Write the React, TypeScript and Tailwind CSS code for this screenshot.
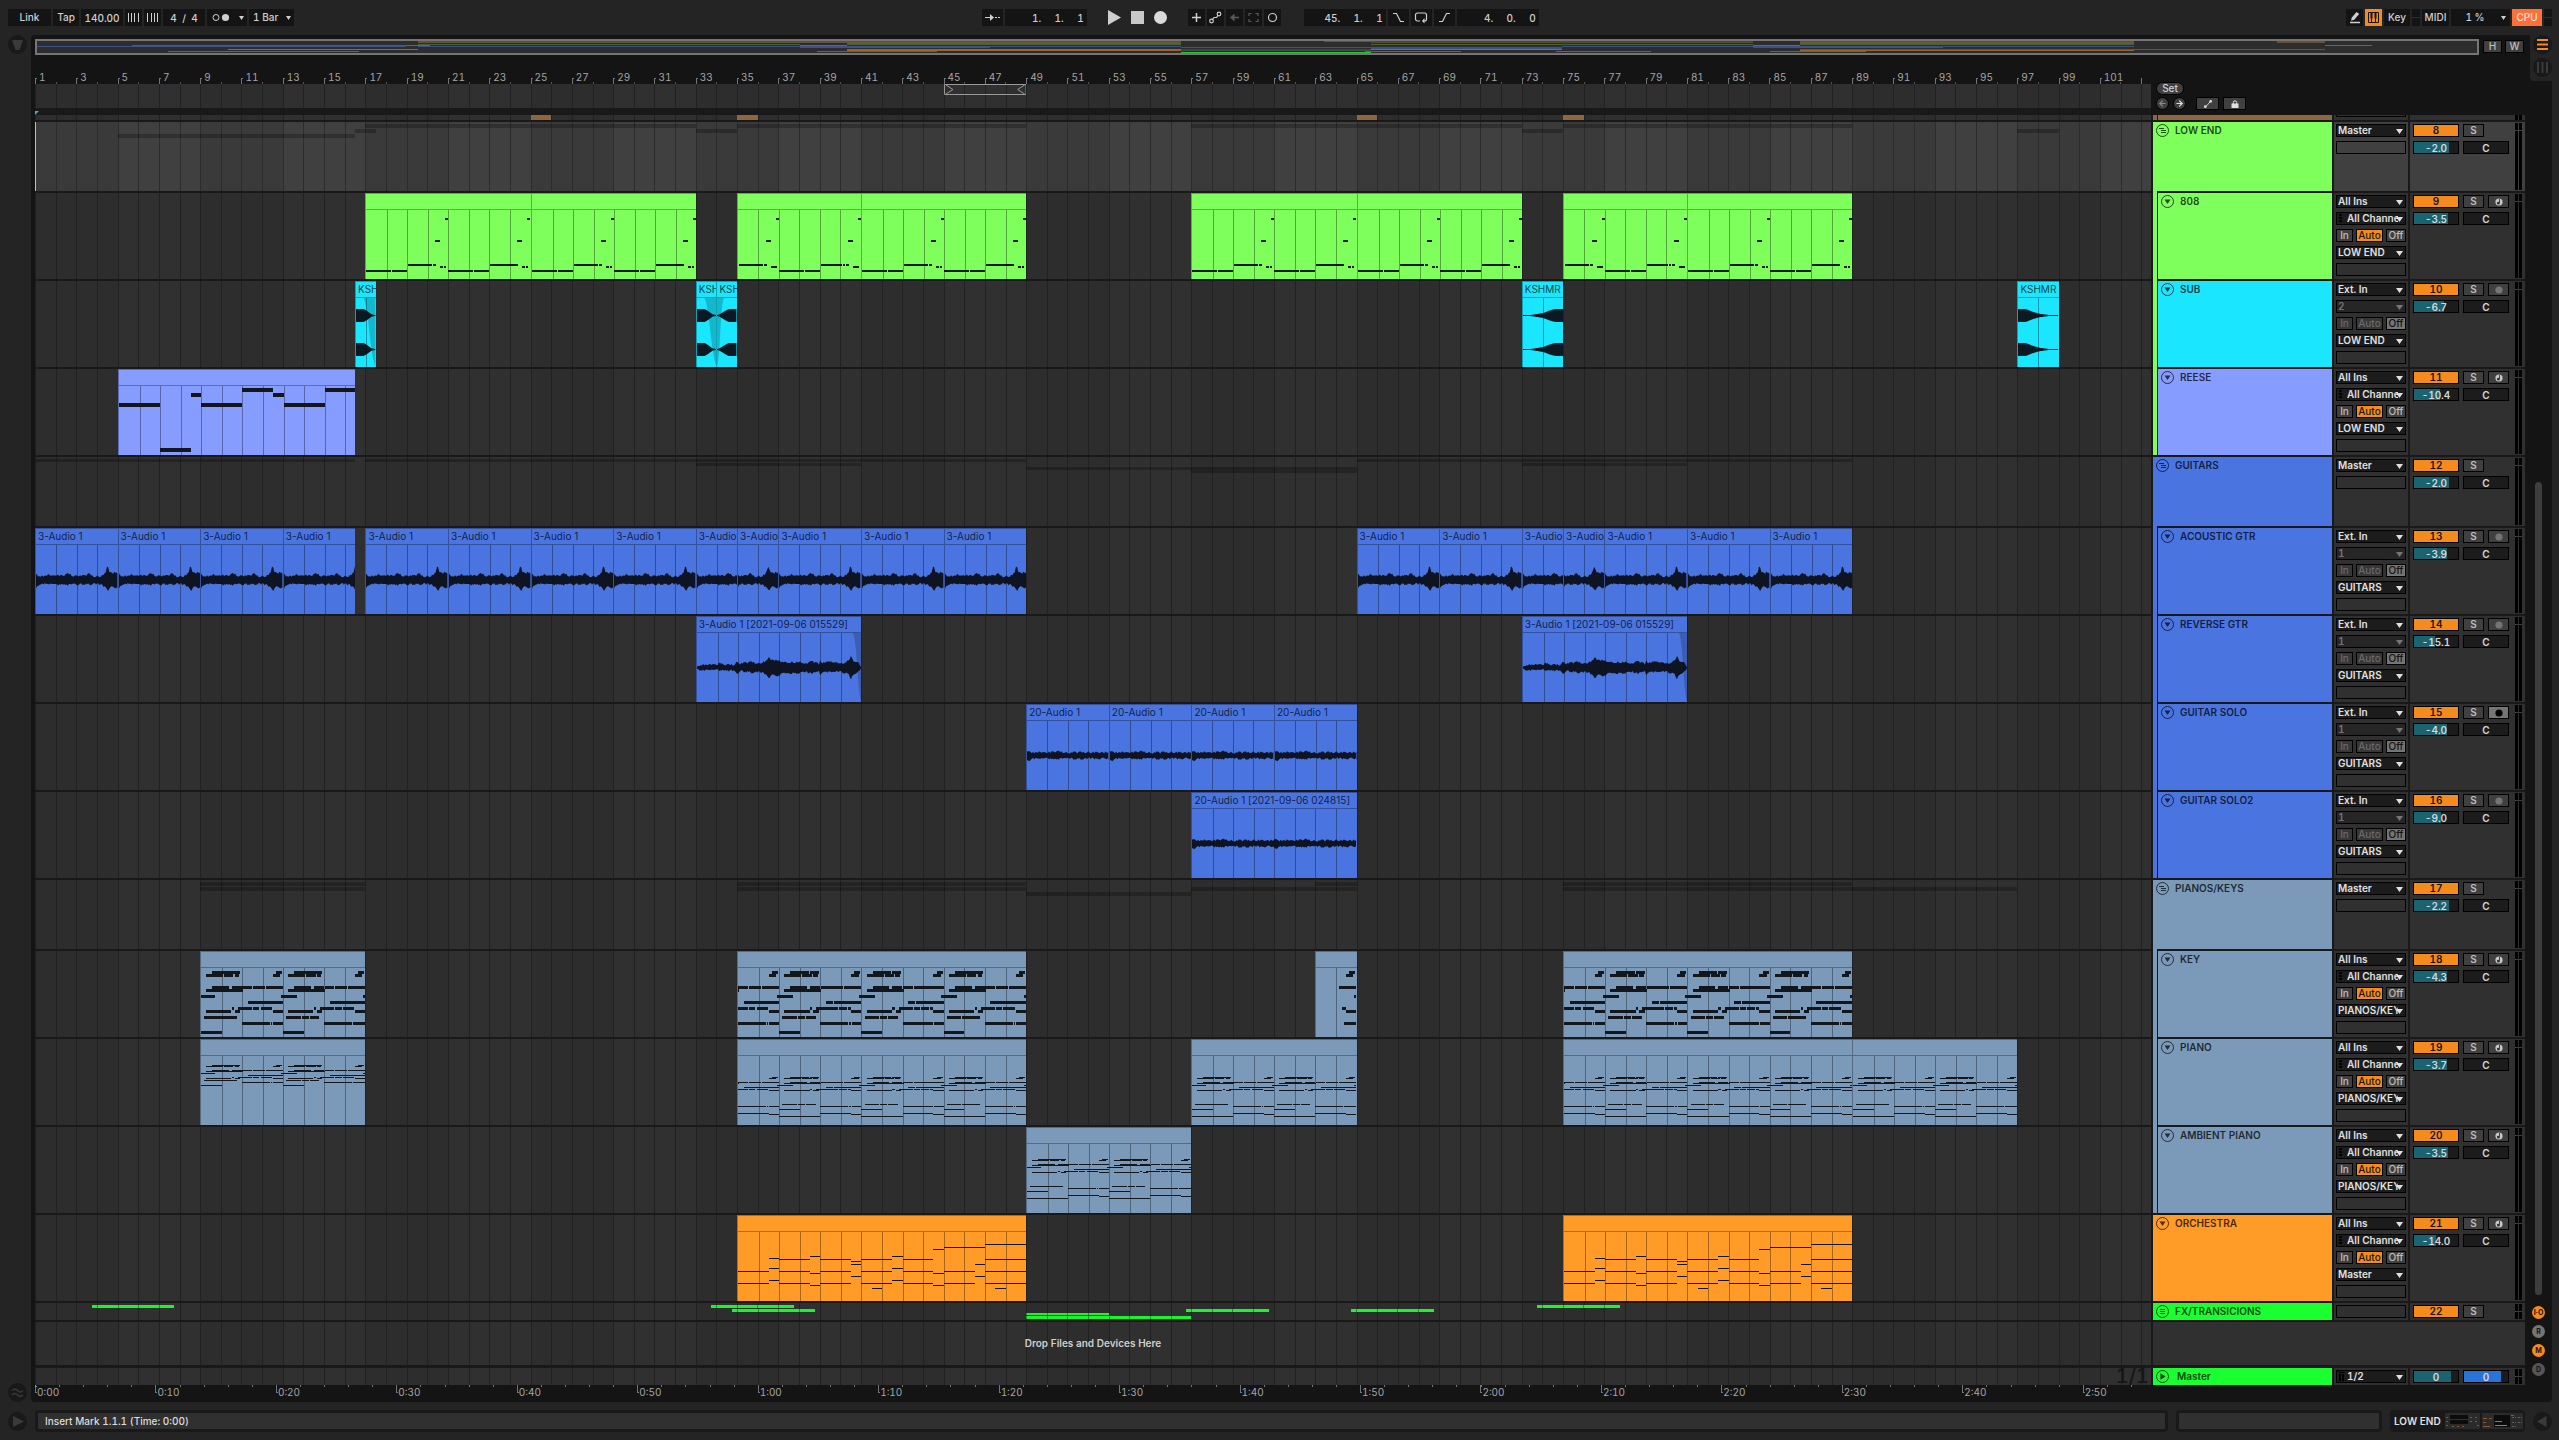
import type { ReactNode } from "react";
import { useState } from "react";
import { ArrowLeft, ArrowRight } from "lucide-react";

const BARS = 102.47;

const C = {
  green: "#7fff5c",
  cyan: "#1ae7ff",
  reese: "#879cff",
  blue: "#4a75e1",
  steel: "#7b9aba",
  orange: "#ff9b26",
  fx: "#19ff2f",
};

type Note = [from: number, to: number, y: number, h: number];

interface ClipData {
  from: number;
  to: number;
  name?: string;
  kind: "808" | "reese" | "key" | "keyTail" | "pianoA" | "pianoB" | "ambient" | "orch" | "acoustic" | "reverse" | "solo" | "sub";
  shape?: "out" | "in" | "riseLong" | "fallLong";
}

interface Track {
  name: string;
  num: number;
  color: string;
  type: "group" | "midi" | "audio";
  parent?: string;
  out?: string;
  input?: string;
  vol: string;
  fill: number;
  armed?: boolean;
  selected?: boolean;
  dense?: boolean;
  clips?: ClipData[];
  ghosts?: [from: number, to: number, row: number][];
}

/* ---------- note patterns, x in bars, y in px ---------- */

const bass: Note[] = [
  [0, 0.86, 60, 2], [0.88, 1.22, 60, 2], [1.26, 2, 60, 2],
  [2.04, 3.1, 54, 2], [3.13, 3.24, 54, 2], [3.27, 3.4, 54, 2],
  [3.62, 3.74, 56, 2], [3.78, 3.9, 56, 2],
  [3.38, 3.6, 30, 2],
  [3.86, 4, 8, 2],
];

const reese: Note[] = [
  [0, 2, 17, 4], [2, 3.5, 62, 4], [3.5, 4, 7, 4], [4, 6, 17, 4],
  [6, 7.5, 2, 4], [7.5, 8, 7, 4], [8, 10, 17, 4], [10, 11.5, 2, 4],
];

// each entry: row index plus the notes on it, over a four bar loop
const keyLoop: [row: number, from: number, to: number][] = [
  [0, 0.55, 1.45], [0, 1.48, 1.92], [0, 3.65, 3.95],
  [1, 0.25, 1.08], [1, 1.12, 1.58], [1, 1.64, 1.87], [1, 3.5, 3.86],
  [2, 0.55, 1.35], [2, 1.5, 1.98], [2, 2.02, 2.5], [2, 2.53, 3.12], [2, 3.15, 4],
  [3, 0.25, 2.05],
  [4, 0, 0.66], [4, 3.88, 4],
  [5, 2.27, 2.62], [5, 2.65, 4],
  [6, 1.5, 1.62], [6, 1.8, 2.5], [6, 2.54, 2.85], [6, 2.9, 3.3], [6, 3.33, 3.47],
  [7, 0.25, 1.48], [7, 1.66, 1.92], [7, 3.5, 4],
  [8, 0.15, 0.86], [8, 0.9, 1.25], [8, 1.29, 1.77],
  [9, 2, 3.36], [9, 3.4, 3.48], [9, 3.52, 4],
  [10, 0, 1],
];
const keyRows = [3, 6, 18, 21, 27, 33, 39, 42, 48, 54, 63];
const pianoRowsA = [9, 10, 14, 15, 17, 19, 21, 22, 24, 26, 29];
const pianoRowsB = [21, 22, 26, 27, 29, 31, 33, 34, 48, 50, 53];
const lowLoop: Note[] = [[2, 3.5, 57, 1], [3.5, 4, 58, 1], [0, 2, 60, 1]];

const keyTail: Note[] = [
  [1.65, 1.95, 3, 3], [1.5, 1.86, 6, 3], [1.15, 2, 18, 3], [1.88, 2, 27, 3],
  [1.3, 1.47, 39, 3], [1.5, 2, 42, 3], [1.4, 2, 54, 3],
];

const orch: Note[] = [
  [0, 1.5, 39, 1], [0, 1.5, 51, 1], [1.5, 2, 26, 1], [1.5, 2, 36, 1], [1.5, 2, 48, 1],
  [2, 3.5, 27, 1], [2, 3.5, 39, 1], [2, 3.5, 51, 1], [3.5, 4, 24, 1], [3.5, 4, 41, 1], [3.5, 4, 53, 1],
  [4, 5.5, 27, 1], [4, 5.5, 39, 1], [4, 5.5, 51, 1], [5.5, 6, 29, 1], [5.5, 6, 32, 1], [5.5, 6, 44, 1],
  [6, 7.5, 27, 1], [6, 7.5, 39, 1], [6, 7.5, 51, 1], [6.5, 7, 56, 1],
  [7.5, 8, 24, 1], [7.5, 8, 36, 1], [7.5, 8, 48, 1],
  [8, 9.5, 27, 1], [8, 9.5, 39, 1], [8, 9.5, 51, 1], [9.5, 10, 17, 1], [9.5, 10, 41, 1], [9.5, 10, 53, 1],
  [10, 12, 15, 1], [10, 11.5, 39, 1], [10, 11.5, 51, 1], [11.5, 12, 32, 1], [11.5, 12, 44, 1],
  [12, 14, 12, 1], [12, 14, 27, 1], [12, 14, 39, 1], [12, 14, 51, 1], [12.5, 13, 56, 1],
];

const keyNotes = (rows: number[], h: number): Note[] => keyLoop.map(([r, a, b]) => [a, b, rows[r], h]);

// repeat a four bar loop on the song grid and cut it to the clip
function tile(loop: Note[], from: number, to: number): Note[] {
  const out: Note[] = [];
  for (let base = Math.floor((from - 1) / 4) * 4 + 1; base < to; base += 4) {
    for (const [a, b, y, h] of loop) {
      const s = Math.max(base + a, from);
      const e = Math.min(base + b, to);
      if (e > s) out.push([s - from, e - from, y, h]);
    }
  }
  return out;
}

function notesFor({ kind, from, to }: ClipData): Note[] {
  switch (kind) {
    case "808":
      return tile(bass, from, to);
    case "reese":
      return reese;
    case "key":
      return tile(keyNotes(keyRows, 3), from, to);
    case "keyTail":
      return keyTail;
    case "pianoA":
      return tile(keyNotes(pianoRowsA, 1), from, to);
    case "pianoB":
      return tile([...keyNotes(pianoRowsB, 1), ...lowLoop], from, to);
    case "ambient":
      return tile([...keyNotes(pianoRowsB, 1), ...lowLoop].map(([a, b, y, h]) => [a, b, y - 6, h]), from, to);
    case "orch":
      return orch;
    default:
      return [];
  }
}

/* ---------- waveforms ---------- */

type Env = [x: number, top: number, bottom: number][];

const acousticEnv: Env = [
  [0, 6.5, 8.5], [0.08, 4.5, 5], [0.35, 4, 4], [0.6, 5.5, 4.5], [0.8, 4, 4], [1, 5, 5], [1.3, 4, 4], [1.6, 6.5, 5],
  [1.9, 3.5, 4], [1.97, 4.5, 4], [2, 6, 8], [2.08, 4.5, 4.5], [2.35, 4, 4], [2.6, 6, 4.5], [2.85, 3.5, 3.5], [3.2, 4, 5],
  [3.42, 7, 7], [3.48, 13.5, 9], [3.54, 13, 10], [3.6, 8, 8], [3.7, 7, 7], [4, 7.5, 8],
];
const reverseEnv: Env = [
  [0, 1, 1], [0.2, 3, 3], [1, 3, 2.5], [1.13, 5, 3], [1.25, 2.5, 2.5], [1.8, 3, 3.5], [2, 6, 7.5], [2.1, 4, 3.5], [2.7, 5.5, 5],
  [3, 4, 4.5], [3.3, 6, 6], [3.45, 7, 8.5], [3.5, 12, 11], [3.6, 7.5, 7.5], [4, 7, 8.5], [4.1, 5, 5], [4.9, 5.5, 6], [5.3, 4, 4],
  [5.6, 6, 5.5], [5.95, 3.5, 4], [6, 6.5, 8], [6.1, 4.5, 4], [6.6, 6, 5], [7, 3.5, 4], [7.4, 7, 7], [7.5, 11.5, 11], [7.6, 7, 7], [7.8, 6, 5], [8, 0.5, 0.5],
];
const soloEnv: Env = [
  [0, 4, 4.5], [0.12, 5, 5], [0.25, 3, 3], [0.5, 3.5, 3.5], [0.9, 3, 3], [1.6, 4, 3.5], [1.9, 3, 3], [2.5, 3, 3.5],
  [3, 3.5, 3], [3.5, 3, 3], [4, 3, 3],
];

const subEnv: Record<string, Env> = {
  out: [[0, 6.5, 6.5], [0.4, 6.5, 6.5], [0.6, 4, 4], [0.8, 1, 1], [1, 0.4, 0.4]],
  in: [[0, 0.4, 0.4], [0.15, 1.5, 1.5], [0.4, 4.5, 4.5], [0.6, 6.5, 6.5], [1, 6.5, 6.5]],
  riseLong: [[0, 0.4, 0.4], [0.4, 0.6, 0.6], [1, 2.5, 2.5], [1.4, 5.5, 5.5], [1.6, 6.5, 6.5], [2, 6.5, 6.5]],
  fallLong: [[0, 6.5, 6.5], [0.4, 6.5, 6.5], [0.7, 4, 4], [1, 2, 2], [1.5, 0.6, 0.6], [2, 0.4, 0.4]],
};

function sample(env: Env, x: number) {
  const i = env.findIndex((p) => p[0] >= x);
  if (i <= 0) return [env[0][1], env[0][2]];
  const [x0, t0, b0] = env[i - 1];
  const [x1, t1, b1] = env[i];
  const k = (x - x0) / (x1 - x0 || 1);
  return [t0 + (t1 - t0) * k, b0 + (b1 - b0) * k];
}

function wavePath(env: Env, from: number, to: number, mid: number, period: number, absolute: boolean, noise: number) {
  const top: string[] = [];
  const bottom: string[] = [];
  const step = 0.06;
  const n = Math.ceil((to - from) / step);
  for (let i = 0; i <= n; i++) {
    const x = Math.min(i * step, to - from);
    const phase = absolute ? (x + from - 1) % period : Math.min(x, period);
    const [t, b] = sample(env, phase);
    const k = Math.round(phase / step);
    const r1 = Math.sin(k * k * 0.7 + k * 2.3) * noise;
    const r2 = Math.sin(k * k * 1.1 + k * 1.9) * noise;
    top.push(`${x.toFixed(3)},${(mid - t + r1).toFixed(2)}`);
    bottom.unshift(`${x.toFixed(3)},${(mid + b + r2).toFixed(2)}`);
  }
  return `M${top.join("L")}L${bottom.join("L")}Z`;
}

const Wave = ({ clip }: { clip: ClipData }) => {
  const len = clip.to - clip.from;
  const paths: string[] = [];
  if (clip.kind === "acoustic") paths.push(wavePath(acousticEnv, clip.from, clip.to, 35, 4, true, 0.9));
  if (clip.kind === "reverse") paths.push(wavePath(reverseEnv, clip.from, clip.to, 34.5, 8, false, 0.9));
  if (clip.kind === "solo") paths.push(wavePath(soloEnv, clip.from, clip.to, 34.5, 4, true, 0.9));
  if (clip.kind === "sub" && clip.shape) {
    paths.push(wavePath(subEnv[clip.shape], clip.from, clip.to, 17.5, 2, false, 0));
    paths.push(wavePath(subEnv[clip.shape], clip.from, clip.to, 51.5, 2, false, 0));
  }
  if (!paths.length) return null;
  return (
    <svg viewBox={`0 0 ${len} 69`} preserveAspectRatio="none" width="100%" height="100%" shapeRendering="auto">
      {clip.kind === "reverse" && <path d={`M${len - 0.4},0C${len - 0.2},8 ${len - 0.2},55 ${len},69V0Z`} fill="#000" opacity=".2" />}
      {clip.shape === "out" && <path d={`M${len - 0.62},0C${len - 0.35},10 ${len - 0.3},55 ${len},69V0Z`} fill="#000" opacity=".2" />}
      {clip.shape === "in" && <path d="M0.35,0C0.15,10 0.2,55 0,69V0Z" fill="#000" opacity=".2" />}
      {paths.map((d, i) => (
        <path key={i} d={d} fill="#0b0f16" fillOpacity=".95" />
      ))}
    </svg>
  );
};

/* ---------- song data ---------- */

const run = (kind: ClipData["kind"], edges: number[], name?: string): ClipData[] =>
  edges.slice(0, -1).map((from, i) => ({ from, to: edges[i + 1], kind, name }));

const tracks: Track[] = [
  {
    name: "LOW END", num: 8, color: C.green, type: "group", out: "Master", vol: "-2.0", fill: 80, selected: true,
    ghosts: [[17, 33, 0], [35, 49, 0], [57, 73, 0], [75, 89, 0], [16.5, 17.5, 1], [33, 35, 1], [73, 75, 1], [97, 99, 1], [5, 16.5, 2]],
  },
  {
    name: "808", num: 9, color: C.green, type: "midi", parent: C.green, out: "LOW END", vol: "-3.5", fill: 77,
    clips: [...run("808", [17, 25, 33]), ...run("808", [35, 41, 49]), ...run("808", [57, 65, 73]), ...run("808", [75, 81, 89])],
  },
  {
    name: "SUB", num: 10, color: C.cyan, type: "audio", parent: C.green, input: "2", out: "LOW END", vol: "-6.7", fill: 68,
    clips: [
      { from: 16.5, to: 17.5, kind: "sub", shape: "out", name: "KSHMR" },
      { from: 33, to: 34, kind: "sub", shape: "out", name: "KSHMR" },
      { from: 34, to: 35, kind: "sub", shape: "in", name: "KSHMR" },
      { from: 73, to: 75, kind: "sub", shape: "riseLong", name: "KSHMR" },
      { from: 97, to: 99, kind: "sub", shape: "fallLong", name: "KSHMR" },
    ],
  },
  {
    name: "REESE", num: 11, color: C.reese, type: "midi", parent: C.green, out: "LOW END", vol: "-10.4", fill: 59,
    clips: run("reese", [5, 16.5]),
  },
  {
    name: "GUITARS", num: 12, color: C.blue, type: "group", out: "Master", vol: "-2.0", fill: 80, dense: true,
    ghosts: [[1, 16.5, 0], [17, 49, 0], [65, 89, 0], [33, 41, 1], [73, 81, 1], [49, 65, 2], [57, 65, 3]],
  },
  {
    name: "ACOUSTIC GTR", num: 13, color: C.blue, type: "audio", parent: C.blue, input: "1", out: "GUITARS", vol: "-3.9", fill: 75,
    clips: [
      ...run("acoustic", [1, 5, 9, 13, 16.5], "3-Audio 1"),
      ...run("acoustic", [17, 21, 25, 29, 33, 35, 37, 41, 45, 49], "3-Audio 1"),
      ...run("acoustic", [65, 69, 73, 75, 77, 81, 85, 89], "3-Audio 1"),
    ],
  },
  {
    name: "REVERSE GTR", num: 14, color: C.blue, type: "audio", parent: C.blue, input: "1", out: "GUITARS", vol: "-15.1", fill: 48,
    clips: [...run("reverse", [33, 41], "3-Audio 1 [2021-09-06 015529]"), ...run("reverse", [73, 81], "3-Audio 1 [2021-09-06 015529]")],
  },
  {
    name: "GUITAR SOLO", num: 15, color: C.blue, type: "audio", parent: C.blue, input: "1", out: "GUITARS", vol: "-4.0", fill: 75, armed: true,
    clips: run("solo", [49, 53, 57, 61, 65], "20-Audio 1"),
  },
  {
    name: "GUITAR SOLO2", num: 16, color: C.blue, type: "audio", parent: C.blue, input: "1", out: "GUITARS", vol: "-9.0", fill: 62,
    clips: run("solo", [57, 65], "20-Audio 1 [2021-09-06 024815]"),
  },
  {
    name: "PIANOS/KEYS", num: 17, color: C.steel, type: "group", out: "Master", vol: "-2.2", fill: 80,
    ghosts: [[9, 17, 0], [35, 49, 0], [63, 65, 0], [75, 89, 0], [9, 17, 1], [35, 49, 1], [57, 65, 1], [75, 97, 1], [49, 57, 2]],
  },
  {
    name: "KEY", num: 18, color: C.steel, type: "midi", parent: C.steel, out: "PIANOS/KEYS", vol: "-4.3", fill: 75,
    clips: [...run("key", [9, 17]), ...run("key", [35, 49]), ...run("keyTail", [63, 65]), ...run("key", [75, 89])],
  },
  {
    name: "PIANO", num: 19, color: C.steel, type: "midi", parent: C.steel, out: "PIANOS/KEYS", vol: "-3.7", fill: 75,
    clips: [...run("pianoA", [9, 17]), ...run("pianoB", [35, 49]), ...run("pianoB", [57, 65]), ...run("pianoB", [75, 89, 97])],
  },
  {
    name: "AMBIENT PIANO", num: 20, color: C.steel, type: "midi", parent: C.steel, out: "PIANOS/KEYS", vol: "-3.5", fill: 77,
    clips: run("ambient", [49, 57]),
  },
  {
    name: "ORCHESTRA", num: 21, color: C.orange, type: "midi", out: "Master", vol: "-14.0", fill: 50,
    clips: [...run("orch", [35, 49]), ...run("orch", [75, 89])],
  },
];

const fxClips: [from: number, to: number, row: number][] = [
  [3.75, 7.75, 0], [33.75, 37.75, 0], [34.75, 38.75, 1], [49, 53, 2], [49, 57, 3],
  [56.75, 60.75, 1], [64.75, 68.75, 1], [73.75, 77.75, 0],
];

const pct = (bars: number) => `${(bars / BARS) * 100}%`;

/* ---------- arrangement lanes ---------- */

const LaneGrid = ({ selected }: { selected?: boolean }) => (
  <svg className="absolute inset-0 h-full w-full" shapeRendering="crispEdges" aria-hidden="true">
    {Array.from({ length: 13 }, (_, i) => (
      <rect key={i} x={pct(i * 8 + 4)} width={pct(4)} height="100%" fill={selected ? "#404040" : "#303030"} />
    ))}
    {Array.from({ length: 103 }, (_, i) => (
      <rect key={i} x={pct(i)} width="1" height="100%" fill={selected ? "#2c2c2c" : "#212121"} />
    ))}
  </svg>
);

const Lane = ({ children, selected }: { children?: ReactNode; selected?: boolean }) => (
  <div className={`relative min-w-0 flex-1 overflow-hidden ${selected ? "bg-[#3a3a3a]" : "bg-[#2d2d2d]"}`}>
    <LaneGrid selected={selected} />
    {children}
  </div>
);

const Clip = ({ clip, color }: { clip: ClipData; color: string }) => {
  const len = clip.to - clip.from;
  const firstLine = Math.ceil(clip.from + 0.01);
  const lines = Array.from({ length: Math.ceil(clip.to) - firstLine }, (_, i) => firstLine + i - clip.from);
  const rel = (b: number) => `${(b / len) * 100}%`;
  return (
    <div
      className="absolute inset-y-0 flex flex-col overflow-hidden border-l border-black/30"
      style={{ left: pct(clip.from - 1), width: pct(len), backgroundColor: color }}
    >
      <div className="h-[17px] shrink-0 overflow-hidden border-y border-black/30 pl-0.5 text-[10px] leading-[15px] whitespace-nowrap text-black/75 proportional-nums">
        {clip.name}
      </div>
      <svg className="min-h-0 w-full flex-1" shapeRendering="crispEdges" aria-hidden="true">
        {lines.map((b) => (
          <rect key={b} x={rel(b)} width="1" height="100%" fill="#000" fillOpacity=".35" />
        ))}
        {notesFor(clip).map(([a, b, y, h], i) => (
          <rect key={i} x={rel(a)} y={y} width={rel(b - a)} height={h} fill="#13171c" />
        ))}
        <Wave clip={clip} />
      </svg>
    </div>
  );
};

const ghostTop = ["top-0.5", "top-[7px]", "top-3", "top-[17px]"];
const fxTop = ["top-0.5", "top-1.5", "top-2.5", "top-[13px]"];

/* ---------- track controls ---------- */

const Caret = ({ dim }: { dim?: boolean }) => (
  <svg viewBox="0 0 7 5" className="pointer-events-none absolute top-1 right-0.5 h-[5px] w-[7px]" aria-hidden="true">
    <path d="M0 0h7L3.5 5Z" fill={dim ? "#757575" : "#e0e0e0"} />
  </svg>
);

const Chooser = ({ label, value, dim, icon }: { label: string; value: string; dim?: boolean; icon?: "dots" | "bars" }) => (
  <div className={`relative h-[13px] w-[70px] border border-black ${dim ? "bg-[#262626]" : "bg-[#1c1c1c]"}`}>
    <select
      aria-label={label}
      disabled={dim}
      className={`block h-[11px] w-[61px] appearance-none overflow-hidden text-[10px] leading-[11px] font-semibold whitespace-nowrap opacity-100 outline-none ${icon ? "pl-2.5" : "pl-px"} ${dim ? "text-[#757575]" : "text-[#e0e0e0]"}`}
    >
      <option>{value}</option>
    </select>
    {icon && (
      <svg viewBox="0 0 5 9" className="absolute top-px left-0.5 h-[9px] w-[5px]" shapeRendering="crispEdges" aria-hidden="true">
        {icon === "dots" ? <path d="M0 0h3v2H0zM0 3h3v2H0zM0 6h3v2H0z" fill="#000" /> : <path d="M0 2h2v7H0zM3 2h2v7H3zM0 0h5v1H0z" fill="#000" />}
      </svg>
    )}
    <Caret dim={dim} />
  </div>
);

const monitorBtn = "h-[13px] border border-black text-center text-[10px] leading-[11px] font-medium";

const Monitor = ({ audio }: { audio: boolean }) => (
  <div className="flex gap-[3px]">
    <button className={`${monitorBtn} w-[17px] ${audio ? "bg-[#373737] text-[#6a6a6a]" : "bg-[#404040] text-[#bdbdbd]"}`}>In</button>
    <button className={`${monitorBtn} w-[27px] ${audio ? "bg-[#373737] text-[#6a6a6a]" : "bg-[#f58b1c] text-[#1a1a1a]"}`}>Auto</button>
    <button className={`${monitorBtn} w-5 ${audio ? "bg-[#757575] text-[#111]" : "bg-[#404040] text-[#bdbdbd]"}`}>Off</button>
  </div>
);

const Slot = () => <div className="h-[13px] w-[70px] border border-black" />;

const Value = ({ label, value, fill, blue }: { label: string; value: string; fill: number; blue?: boolean }) => (
  <input
    aria-label={label}
    defaultValue={value}
    className="h-[13px] w-[46px] border border-black text-center text-[10px] leading-[11px] font-semibold text-[#d8d8d8] outline-none"
    style={{ background: `linear-gradient(90deg, ${blue ? "#2874d8" : "#1a6472"} ${fill}%, #1c1c1c ${fill}%)` }}
  />
);

const Activator = ({ num }: { num: number }) => (
  <button className="h-[13px] w-[46px] border border-black bg-[#f58b1c] text-center text-[10px] leading-[11px] font-semibold text-[#141414]">{num}</button>
);

const Solo = () => (
  <button className="h-[13px] w-[21px] border border-black bg-[#404040] text-center text-[10px] leading-[11px] font-semibold text-[#bdbdbd]">S</button>
);

const Arm = ({ midi, on }: { midi: boolean; on?: boolean }) => (
  <button aria-label="Arm" className={`flex h-[13px] w-[21px] items-center justify-center border border-black ${on ? "bg-[#757575]" : "bg-[#404040]"}`}>
    <svg viewBox="0 0 8 8" className="h-2 w-2">
      <circle cx="4" cy="4" r="3.6" fill={on ? "#000" : midi ? "#c8c8c8" : "#757575"} />
      {midi && <path d="M4 .8h.9v4.400a1.500 1.300 0 1 1-.9-1.200Z" fill="#333" />}
    </svg>
  </button>
);

const Meter = () => (
  <div className="my-px ml-auto flex gap-px self-stretch">
    <div className="flex w-[3px] flex-col bg-black pt-[7px]"><div className="h-px bg-[#404040]" /></div>
    <div className="flex w-[3px] flex-col bg-black pt-[7px]"><div className="h-px bg-[#404040]" /></div>
  </div>
);

const FoldIcon = ({ kind }: { kind: "down" | "right" | "group" | "list" }) => (
  <svg viewBox="0 0 13 13" className="h-[13px] w-[13px] shrink-0" fill="none" stroke="#000" strokeOpacity=".7" aria-hidden="true">
    <circle cx="6.5" cy="6.5" r="6" />
    {kind === "down" && <path d="M3.5 4.5h6l-3 4.5Z" fill="#000" fillOpacity=".7" stroke="none" />}
    {kind === "right" && <path d="M4.5 3.2v6.6l5-3.3Z" fill="#000" fillOpacity=".8" stroke="none" />}
    {kind === "group" && <path d="M3 4.5h5M5 6.5h5M5 8.5h5" />}
    {kind === "list" && <path d="M4 4.5h5M4 6.5h5M4 8.5h5" />}
  </svg>
);

const TrackTitle = ({ name, color, parent, icon }: { name: string; color: string; parent?: string; icon: "down" | "right" | "group" | "list" }) => (
  <div className="ml-0.5 flex w-[179px] shrink-0">
    {parent && <div className="-mt-0.5 mr-px w-1" style={{ backgroundColor: parent }} />}
    <div className="flex min-w-0 flex-1 items-start gap-1.5 pt-0.5 pl-[3px]" style={{ backgroundColor: color }}>
      <FoldIcon kind={icon} />
      <span className={`text-[10px] leading-[13px] font-semibold text-black/75 ${icon === "right" ? "pl-0.5" : ""}`}>{name}</span>
    </div>
  </div>
);

const TrackRow = ({ track }: { track: Track }) => {
  const bg = track.selected ? "bg-[#404040]" : "bg-[#303030]";
  const group = track.type === "group";
  const audio = track.type === "audio";
  return (
    <div className={`flex shrink-0 ${group ? "h-[69px]" : "h-[86px]"}`}>
      <Lane selected={track.selected}>
        {track.ghosts?.map(([a, b, row], i) => (
          <div
            key={i}
            className={`absolute bg-black/25 ${track.dense ? "h-[3px]" : "h-1"} ${track.dense ? fxTop[row] : ghostTop[row]}`}
            style={{ left: pct(a - 1), width: pct(b - a) }}
          />
        ))}
        {track.clips?.map((clip) => <Clip key={clip.from} clip={clip} color={track.color} />)}
        {track.selected && <div className="absolute inset-y-0 left-0 w-px bg-[#7fd8ea]" />}
      </Lane>
      <TrackTitle name={track.name} color={track.color} parent={track.parent} icon={group ? "group" : "down"} />
      <div className={`ml-0.5 flex w-[74px] shrink-0 flex-col gap-1 px-0.5 pt-0.5 ${bg}`}>
        {group ? (
          <Chooser label={`${track.name} output`} value={track.out!} />
        ) : (
          <>
            <Chooser label={`${track.name} input`} value={audio ? "Ext. In" : "All Ins"} />
            <Chooser label={`${track.name} channel`} value={audio ? track.input! : "All Channels"} dim={audio} icon={audio ? undefined : "dots"} />
            <Monitor audio={audio} />
            <Chooser label={`${track.name} output`} value={track.out!} />
          </>
        )}
        <Slot />
      </div>
      <div className={`ml-0.5 flex w-[115px] shrink-0 px-[3px] ${bg}`}>
        <div className="flex flex-col gap-1 pt-0.5">
          <div className="flex gap-1">
            <Activator num={track.num} />
            <Solo />
            {!group && <Arm midi={!audio} on={track.armed} />}
          </div>
          <div className="flex gap-1">
            <Value label={`${track.name} volume`} value={track.vol} fill={track.fill} />
            <Value label={`${track.name} pan`} value="C" fill={0} />
          </div>
        </div>
        <Meter />
      </div>
    </div>
  );
};

/* ---------- top bar ---------- */

const box = "flex h-[17px] shrink-0 items-center justify-center bg-[#141414] text-[10px] font-medium text-[#cfcfcf]";
const field = "h-[17px] shrink-0 bg-[#141414] text-[10px] font-medium text-[#cfcfcf] outline-none";

const IconBox = ({ label, children, wide, active }: { label: string; children: ReactNode; wide?: boolean; active?: boolean }) => (
  <button
    aria-label={label}
    className={`flex h-[17px] shrink-0 items-center justify-center ${wide ? "w-[21px]" : "w-[17px]"} ${active ? "bg-[#f58b1c]" : "bg-[#141414]"}`}
  >
    <svg viewBox="0 0 17 17" className="h-[17px] w-[17px]" fill="none" stroke="#cfcfcf" strokeWidth="1.2">
      {children}
    </svg>
  </button>
);

const TopBar = () => (
  <header className="flex h-[35px] shrink-0 items-center pl-2 pr-[7px]">
    <div className="flex gap-0.5">
      <button className={`${box} w-[43px]`}>Link</button>
      <button className={`${box} w-[26px]`}>Tap</button>
      <input aria-label="Tempo" defaultValue="140.00" className={`${field} w-[42px] text-center`} />
      <IconBox label="Nudge down"><path d="M3.5 4v9M6.5 4v9M9.5 4v9M13.5 4v9" strokeWidth="1" shapeRendering="crispEdges" /></IconBox>
      <IconBox label="Nudge up"><path d="M3.5 4v9M7.5 4v9M10.5 4v9M13.5 4v9" strokeWidth="1" shapeRendering="crispEdges" /></IconBox>
      <input aria-label="Time signature" defaultValue="4  /  4" className={`${field} w-[42px] text-center whitespace-pre`} />
      <button aria-label="Metronome" className={`${box} w-10`}>
        <svg viewBox="0 0 40 17" className="h-[17px] w-10">
          <circle cx="9" cy="8.5" r="3" fill="none" stroke="#cfcfcf" />
          <circle cx="18.5" cy="8.5" r="3.6" fill="#cfcfcf" />
          <path d="M32 7h5l-2.500 4Z" fill="#cfcfcf" />
        </svg>
      </button>
      <div className="relative">
        <select aria-label="Quantization" className={`${field} block w-[45px] appearance-none pl-1`}>
          <option>1 Bar</option>
        </select>
        <svg viewBox="0 0 5 4" className="pointer-events-none absolute top-[7px] right-[3px] h-1 w-[5px]">
          <path d="M0 0h5L2.500 4Z" fill="#cfcfcf" />
        </svg>
      </div>
    </div>
    <div className="grow-[46]" />
    <div className="flex items-center gap-0.5">
      <IconBox label="Follow" wide><path d="M1 8.5h7M11 8.5h2M14 8.5h2" /><path d="M6 5l4 3.500L6 12Z" fill="#cfcfcf" stroke="none" /></IconBox>
      <input aria-label="Position" defaultValue="1.     1.     1" className={`${field} w-[82px] pr-[3px] text-right`} />
      <div className="flex items-center px-4">
        <button aria-label="Play" className="flex w-6 items-center">
          <svg viewBox="0 0 14 15" className="ml-[3px] h-[15px] w-3.5"><path d="M0 0v15l13-7.500Z" fill="#cfcfcf" /></svg>
        </button>
        <button aria-label="Stop" className="flex w-6 items-center pl-0.5"><span className="h-[13px] w-[13px] bg-[#c8c8c8]" /></button>
        <button aria-label="Record" className="flex w-[17px] items-center pl-px"><span className="h-[13px] w-[13px] rounded-full bg-[#dadada]" /></button>
      </div>
      <IconBox label="Overdub"><path d="M8.5 4v9M4 8.5h9" strokeWidth="1.5" /></IconBox>
      <IconBox label="Automation arm"><circle cx="4.5" cy="12" r="1.8" /><circle cx="12" cy="5" r="1.8" /><path d="M5.500 10.500 7 8.500h2.500L11 6.500" /></IconBox>
      <IconBox label="Re-enable automation"><path d="M13 8.5H7" stroke="#5a5a5a" strokeWidth="1.5" /><path d="M8.500 4.500v8L4 8.500Z" fill="#5a5a5a" stroke="none" /></IconBox>
      <IconBox label="Capture"><path d="M4 7V4.500h2.500M10.500 4.500H13V7M13 10v2.500h-2.500M6.500 12.500H4V10" stroke="#5a5a5a" /></IconBox>
      <IconBox label="Session record"><circle cx="8.5" cy="8.5" r="4" /></IconBox>
      <input aria-label="Loop start" defaultValue="45.     1.     1" className={`${field} ml-[21px] w-[82px] pr-[3px] text-right`} />
      <IconBox label="Punch in" wide><path d="M3 4.500h3.500l4 8H14" /></IconBox>
      <IconBox label="Loop" wide><path d="M7 12H4.500a2 2 0 0 1-2-2V6a2 2 0 0 1 2-2h7a2 2 0 0 1 2 2v4a2 2 0 0 1-2 2H10" /><path d="M11.500 9 9 12l2.500 2.500Z" fill="#cfcfcf" stroke="none" /></IconBox>
      <IconBox label="Punch out" wide><path d="M3 12.500h3.500l4-8H14" /></IconBox>
      <input aria-label="Loop length" defaultValue="4.     0.     0" className={`${field} w-[82px] pr-[3px] text-right`} />
    </div>
    <div className="grow-[54]" />
    <div className="flex gap-0.5">
      <IconBox label="Draw mode"><path d="M4 13.500h10" strokeWidth="1.500" /><path d="M5 11.800 5.800 8.500l4.700-5.500 2.700 2-5 5.800Z" fill="#cfcfcf" stroke="none" /></IconBox>
      <IconBox label="Computer keyboard" active>
        <path d="M3.5 3.5h10v10h-10zM6.5 9v4.500M10.5 9v4.500" stroke="#141414" strokeWidth="1" />
        <path d="M5.500 3.500h2v6h-2zM9.500 3.500h2v6h-2z" fill="#141414" stroke="none" />
      </IconBox>
      <button className={`${box} w-[26px]`}>Key</button>
      <div className={`${box} w-2`}><span className="h-px w-2 bg-[#2c2c2c]" /></div>
      <button className={`${box} w-[27px]`}>MIDI</button>
      <button className={`${box} w-[59px] gap-4 pl-2.5`}>
        1 %
        <svg viewBox="0 0 5 4" className="h-1 w-[5px]"><path d="M0 0h5L2.500 4Z" fill="#cfcfcf" /></svg>
      </button>
      <button className="h-[17px] w-[30px] bg-[#ff7038] text-[10px] font-medium text-[#e8e0dc]">CPU</button>
      <div className={`${box} w-2`}><span className="h-px w-2 bg-[#2c2c2c]" /></div>
    </div>
  </header>
);

/* ---------- overview and rulers ---------- */

const OVERVIEW_BARS = 102.4;

const overview: [from: number, to: number, y: number, h: number, color: string][] = [
  [17, 33, 0, 2, "#674f3c"], [33, 49, 0, 2, "#674f3c"], [57, 73, 0, 2, "#5a4636"], [75, 89, 0, 2, "#674f3c"], [55, 57, 0, 1, "#674f3c"], [95, 97, 0, 2, "#674f3c"],
  [35, 49, 1, 2, "#715339"], [75, 89, 1, 2, "#715339"], [17, 33, 3, 1, "#44632f"], [35, 49, 3, 1, "#44632f"], [57, 73, 3, 1, "#44632f"], [75, 89, 3, 1, "#44632f"],
  [16.5, 17.5, 4, 1, "#238088"], [33, 35, 4, 1, "#238088"], [73, 75, 4, 1, "#238088"], [97, 99, 4, 1, "#238088"], [5, 16.5, 4, 1, "#4d5886"],
  [1, 16.5, 5, 1, "#3c508c"], [17, 49, 5, 1, "#3c508c"], [65, 89, 5, 1, "#3c508c"], [33, 41, 6, 1, "#3c508c"], [73, 81, 6, 1, "#3c508c"],
  [49, 65, 6, 1, "#3c508c"], [57, 65, 7, 1, "#3c508c"],
  [9, 17, 8, 1, "#5f7386"], [35, 49, 8, 1, "#5f7386"], [57, 65, 8, 1, "#5f7386"], [75, 97, 8, 1, "#4c5a68"], [49, 57, 8, 2, "#3d4650"],
  [35, 49, 9, 1, "#98642a"], [75, 89, 9, 1, "#98642a"],
  [6.5, 14.5, 10, 1, "#2a8a30"], [33.75, 38.75, 10, 1, "#2a8a30"], [49, 57, 11, 1, "#1fc62e"], [56.75, 60.75, 10, 1, "#2a8a30"],
  [64.75, 68.75, 10, 1, "#2a8a30"], [73.75, 77.75, 10, 1, "#2a8a30"],
];

const Overview = () => (
  <div className="flex h-5 items-start gap-[3px] pt-1 pr-px">
    <div className="mr-px h-4 flex-1 border-2 border-[#757575] bg-[#2d2d2d]">
      <svg className="block h-full w-full" shapeRendering="crispEdges" aria-hidden="true">
        {overview.map(([a, b, y, h, fill], i) => (
          <rect key={i} x={`${((a - 1) / OVERVIEW_BARS) * 100}%`} y={y} width={`${((b - a) / OVERVIEW_BARS) * 100}%`} height={h} fill={fill} />
        ))}
      </svg>
    </div>
    <button className="mt-px h-[13px] w-[19px] border border-black bg-[#404040] text-[10px] leading-[11px] font-medium text-[#bdbdbd]">H</button>
    <button className="mt-px h-[13px] w-[19px] border border-black bg-[#404040] text-[10px] leading-[11px] font-medium text-[#bdbdbd]">W</button>
  </div>
);

const BarRuler = () => (
  <div className="flex h-[29px] items-end">
    {Array.from({ length: 51 }, (_, i) => (
      <div key={i} className="flex h-3 min-w-0 basis-0 items-end" style={{ flexGrow: 2 }}>
        <div className="flex h-full w-1/2 items-end">
          <span className="h-[6px] w-0.5 shrink-0 border-t border-l border-[#757575]" />
          <span className="pb-px pl-0.5 text-[10px] leading-[11px] text-[#a5a5a5]">{i * 2 + 1}</span>
        </div>
        <span className="h-0.5 w-px bg-[#555]" />
      </div>
    ))}
    <div className="flex h-3 basis-0 items-end" style={{ flexGrow: 0.47 }}>
      <span className="h-[6px] w-px bg-[#757575]" />
    </div>
  </div>
);

const TimeRuler = () => (
  <div className="flex h-[17px] min-w-0 flex-1">
    {Array.from({ length: 18 }, (_, i) => (
      <div key={i} className="flex h-full min-w-0 basis-0" style={{ flexGrow: i === 17 ? 5.66 : 10 }}>
        <span className="h-2 w-0.5 shrink-0 border-b border-l border-[#757575]" />
        <span className="text-[10px] leading-[15px] text-[#a5a5a5]">{`${Math.floor(i / 6)}:${(i % 6) * 10 || "00"}`}</span>
      </div>
    ))}
  </div>
);

const TimeTicks = () => (
  <svg className="absolute inset-x-0 top-0 h-0.5 w-full" shapeRendering="crispEdges" aria-hidden="true">
    {Array.from({ length: 88 }, (_, i) => (
      <rect key={i} x={`${((i * 2) / 175.66) * 100}%`} width="1" height="2" fill="#757575" />
    ))}
    <path d="M0 0h1v1h1v1H0Z" fill="#2bb8d8" />
  </svg>
);

const roundBtn = "flex h-[13px] items-center justify-center rounded-full border border-black bg-[#404040]";

const RulerSection = () => (
  <div className="flex">
    <div className="min-w-0 flex-1">
      <BarRuler />
      <div className="flex h-6">
        <Lane>
          <svg
            className="absolute top-0 h-[11px]"
            style={{ left: pct(44), width: pct(4) }}
            viewBox="0 0 83 11"
            preserveAspectRatio="none"
            fill="none"
            stroke="#9a9a9a"
          >
            <path d="M.5.5h82v10h-82ZM2 1l7 4.500L2 10M81 1l-7 4.500L81 10" />
          </svg>
        </Lane>
      </div>
      <div className="flex h-[7px] items-end bg-[#191919]">
        <svg viewBox="0 0 4 4" className="h-1 w-1"><path d="M0 0h4L0 4Z" fill="#2bb8d8" /></svg>
      </div>
    </div>
    <div className="flex w-[374px] shrink-0 flex-col items-start gap-0.5 pt-[27px] pl-[5px]">
      <button className={`${roundBtn} w-7 text-[10px] font-medium text-[#cfcfcf]`}>Set</button>
      <div className="flex">
        <button aria-label="Previous locator" className={`${roundBtn} w-[13px]`}><ArrowLeft size={9} strokeWidth={3} color="#8a8a8a" /></button>
        <button aria-label="Next locator" className={`${roundBtn} ml-1 w-[13px]`}><ArrowRight size={9} strokeWidth={3} color="#e0e0e0" /></button>
        <button aria-label="Automation mode" className="ml-2.5 flex h-[13px] w-[23px] items-center justify-center border border-black bg-[#404040]">
          <svg viewBox="0 0 9 9" className="h-2 w-2"><path d="M1.500 7.500 4 5.500l1.500-2 2-2" stroke="#e0e0e0" fill="none" /><circle cx="1.5" cy="7.5" r="1.5" fill="#e0e0e0" /><circle cx="7.5" cy="1.5" r="1.5" fill="#e0e0e0" /></svg>
        </button>
        <button aria-label="Lock envelopes" className="ml-1 flex h-[13px] w-[23px] items-center justify-center border border-black bg-[#404040]">
          <svg viewBox="0 0 8 8" className="h-2 w-2"><path d="M2.300 4V2.500a1.700 1.700 0 0 1 3.400 0V4" stroke="#e0e0e0" fill="none" /><path d="M.5 3.500h7V8h-7Z" fill="#e0e0e0" /></svg>
        </button>
      </div>
    </div>
  </div>
);

/* ---------- lower rows ---------- */

const FxRow = () => (
  <div className="flex h-[17px] shrink-0">
    <Lane>
      {fxClips.map(([a, b, row], i) => (
        <div key={i} className={`absolute bg-[#19f52c] ${row === 2 ? "h-0.5" : "h-[3px]"} ${fxTop[row]}`} style={{ left: pct(a - 1), width: pct(b - a) }}>
          <svg className="block h-full w-full" shapeRendering="crispEdges" aria-hidden="true">
            {Array.from({ length: Math.floor(b) - Math.floor(a) + 1 }, (_, k) => Math.ceil(a) + k)
              .filter((bar) => bar < b)
              .map((bar) => (
                <rect key={bar} x={`${((bar - a) / (b - a)) * 100}%`} width="1" height="100%" fill="#000" fillOpacity=".35" />
              ))}
          </svg>
        </div>
      ))}
    </Lane>
    <TrackTitle name="FX/TRANSICIONS" color={C.fx} icon="list" />
    <div className="ml-0.5 w-[74px] shrink-0 bg-[#303030] px-0.5 pt-0.5"><Slot /></div>
    <div className="ml-0.5 flex w-[115px] shrink-0 bg-[#303030] px-[3px]">
      <div className="flex gap-1 pt-0.5">
        <Activator num={22} />
        <Solo />
      </div>
      <Meter />
    </div>
  </div>
);

const MasterRow = () => (
  <div className="mt-px flex h-[17px] shrink-0">
    <Lane>
      <span className="absolute right-0.5 bottom-0 text-[20px] leading-[17px] font-medium text-[#161616]">1/1</span>
    </Lane>
    <TrackTitle name="Master" color={C.fx} icon="right" />
    <div className="ml-0.5 w-[74px] shrink-0 bg-[#303030] px-0.5 pt-0.5"><Chooser label="Master output" value="1/2" icon="bars" /></div>
    <div className="ml-0.5 flex w-[115px] shrink-0 bg-[#303030] px-[3px]">
      <div className="flex gap-1 pt-0.5">
        <Value label="Master volume" value="0" fill={84} />
        <Value label="Cue volume" value="0" fill={84} blue />
      </div>
      <Meter />
    </div>
  </div>
);

const SliverRow = () => (
  <div className="flex h-[5px] shrink-0">
    <Lane>
      {[25, 35, 65, 75].map((b) => (
        <div key={b} className="absolute inset-y-0 bg-[#8f6642]" style={{ left: pct(b - 1), width: pct(1) }} />
      ))}
    </Lane>
    <div className="ml-0.5 flex w-[179px] shrink-0 gap-px"><div className="w-1 bg-[#8f6642]" /><div className="flex-1 bg-[#8f6642]" /></div>
    <div className="ml-0.5 w-[74px] shrink-0 bg-[#303030] px-0.5"><div className="h-0.5 border border-t-0 border-black" /></div>
    <div className="ml-0.5 flex w-[115px] shrink-0 justify-end gap-px bg-[#303030] pr-[3px]"><div className="w-[3px] bg-black" /><div className="w-[3px] bg-black" /></div>
  </div>
);

const SectionToggles = () => {
  const [on, setOn] = useState<Record<string, boolean>>({ "I·O": true, R: false, M: true, D: false });
  return (
    <div className="flex flex-col items-center gap-1.5">
      {Object.keys(on).map((key) => (
        <button
          key={key}
          onClick={() => setOn({ ...on, [key]: !on[key] })}
          className={`flex h-[13px] w-[13px] items-center justify-center rounded-full text-[7px] leading-none font-bold text-[#141414] ${on[key] ? "bg-[#f58b1c]" : key === "D" ? "bg-[#555]" : "bg-[#757575]"}`}
        >
          {key}
        </button>
      ))}
    </div>
  );
};

const GutterButton = ({ label, children }: { label: string; children: ReactNode }) => (
  <button aria-label={label} className="flex h-[19px] w-[19px] shrink-0 items-center justify-center rounded-full bg-[#191919]">
    <svg viewBox="0 0 19 19" className="h-[19px] w-[19px]" fill="none">{children}</svg>
  </button>
);

const StatusBar = () => (
  <footer className="flex h-[38px] shrink-0 items-center gap-2 pr-[7px] pl-2">
    <GutterButton label="Show info"><path d="M5 4v11l11-5.500Z" fill="#3a3a3a" /></GutterButton>
    <div className="flex h-[22px] min-w-0 flex-1 items-center rounded border-[3px] border-[#191919] bg-[#303030] pl-[7px] text-[10px] font-medium text-[#dcdcdc]">
      Insert Mark 1.1.1 (Time: 0:00)
    </div>
    <div className="h-[22px] w-[206px] rounded border-[3px] border-[#191919] bg-[#303030]" />
    <div className="flex h-[22px] w-[135px] items-center gap-1 rounded bg-[#191919] pl-1 text-[10px] font-semibold whitespace-nowrap text-[#e0e0e0]">
      LOW END
      <svg viewBox="0 0 78 16" className="h-4 w-[78px] shrink-0" shapeRendering="crispEdges" aria-hidden="true">
        <path d="M0 0h35v16H0zM37 0h41v16H37z" fill="#2b2b2b" />
        <path d="M5 2h18v9H5zM49 2h16v12H49z" fill="#0c0c0c" />
        <path d="M5 6h18" stroke="#1b3a44" />
        <path d="M50 8.500h7M50 12.500h12" stroke="#1fa8bd" />
        <path d="M1 4.500h3M1 8.500h3M1 12.500h3M25 4.500h3M30 4.500h3M25 8.500h3M30 8.500h3M67 4.500h4M73 4.500h4M67 9.500h4M73 9.500h4M67 13.500h4" stroke="#5f5f5f" strokeDasharray="2 1" />
        <path d="M7 13.500h2M12 13.500h2M17 13.500h2M32 12.500h2M38 5.500h4M44 5.500h3M38 9.500h3M38 13.500h7M66 2.500h3" stroke="#8a5a28" />
      </svg>
    </div>
    <GutterButton label="Toggle device view"><path d="M13.500 4v11L4 9.500Z" fill="#3a3a3a" /></GutterButton>
  </footer>
);

export default function App() {
  return (
    <div className="flex min-h-screen flex-col bg-[#242424] font-['Inter','Liberation_Sans',sans-serif] tabular-nums select-none">
      <TopBar />
      <main className="flex flex-1">
        <div className="flex w-[31px] shrink-0 flex-col items-start justify-between pl-2">
          <GutterButton label="Toggle browser"><path d="M4 5h11l-3.500 10h-4Z" fill="#3a3a3a" /></GutterButton>
          <GutterButton label="Groove pool"><path d="M4 7.500c2-2 3.500-2 5.500 0s3.500 2 5.500 0M4 12c2-2 3.500-2 5.500 0s3.500 2 5.500 0" stroke="#3a3a3a" strokeWidth="1.5" /></GutterButton>
        </div>
        <div className="mr-[7px] flex min-w-0 flex-1 flex-col rounded bg-[#141414] pl-1">
          <div className="flex">
            <div className="min-w-0 flex-1">
              <Overview />
              <RulerSection />
            </div>
            <div className="w-[27px] shrink-0 pl-[5px]">
              <div className="flex h-[46px] flex-col items-end gap-1 rounded-bl bg-[#242424]">
                <GutterButton label="Arrangement view"><path d="M4 5h11M4 9.500h11M4 14h11" stroke="#f58b1c" strokeWidth="2" /></GutterButton>
                <GutterButton label="Session view"><path d="M5 4v11M9.500 4v11M14 4v11" stroke="#3a3a3a" strokeWidth="2" /></GutterButton>
              </div>
            </div>
          </div>
          <div className="flex flex-1">
            <div className="flex min-w-0 flex-1 flex-col gap-0.5 bg-[#191919]">
              <SliverRow />
              {tracks.map((track) => <TrackRow key={track.num} track={track} />)}
              <FxRow />
              <div className="flex flex-1">
                <Lane>
                  <p className="relative flex h-full items-center justify-center text-[10px] font-semibold text-[#cfcfcf]">Drop Files and Devices Here</p>
                </Lane>
                <div className="ml-0.5 w-[372px] shrink-0 bg-[#303030]" />
              </div>
              <MasterRow />
            </div>
            <div className="flex w-[27px] shrink-0 flex-col items-center gap-[11px] pt-[367px] pb-[9px]">
              <div className="w-[7px] flex-1 rounded-full bg-[#3e3e3e]" />
              <SectionToggles />
            </div>
          </div>
          <div className="flex">
            <div className="relative flex min-w-0 flex-1">
              <TimeTicks />
              <TimeRuler />
            </div>
            <div className="w-[401px] shrink-0" />
          </div>
        </div>
      </main>
      <StatusBar />
    </div>
  );
}
